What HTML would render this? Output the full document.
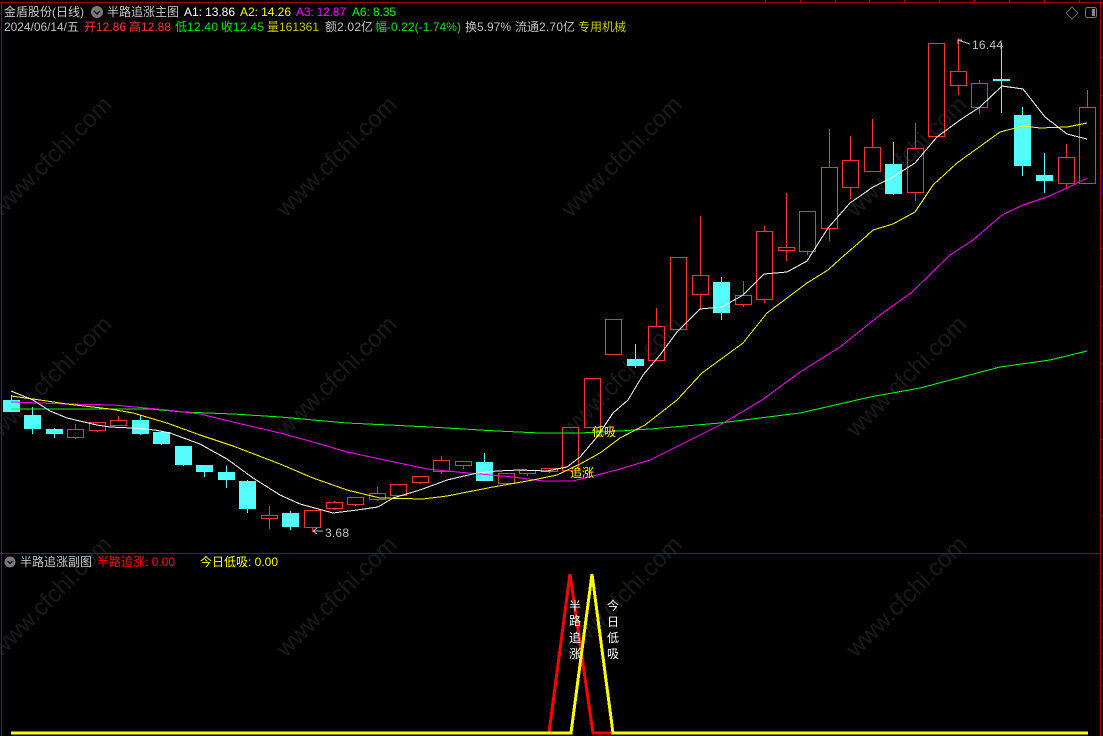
<!DOCTYPE html>
<html><head><meta charset="utf-8"><style>
html,body{margin:0;padding:0;background:#000;width:1103px;height:736px;overflow:hidden}
svg{position:absolute;left:0;top:0;display:block}
text{font-family:"Liberation Sans","WenQuanYi Zen Hei","Noto Sans CJK SC",sans-serif;font-size:12px}
.wm text{font-size:24px;fill:#1a1a1a;text-anchor:middle}
.g{fill:#c0c0c0}.r{fill:#ff3232}.n{fill:#00e600}.o{fill:#c8c800}
</style></head><body>
<svg width="1103" height="736" viewBox="0 0 1103 736" xmlns="http://www.w3.org/2000/svg">
<g class="wm">
<text transform="translate(57,162) rotate(-45)">www.cfchi.com</text>
<text transform="translate(342,162) rotate(-45)">www.cfchi.com</text>
<text transform="translate(627,162) rotate(-45)">www.cfchi.com</text>
<text transform="translate(912,162) rotate(-45)">www.cfchi.com</text>
<text transform="translate(57,382) rotate(-45)">www.cfchi.com</text>
<text transform="translate(342,382) rotate(-45)">www.cfchi.com</text>
<text transform="translate(627,382) rotate(-45)">www.cfchi.com</text>
<text transform="translate(912,382) rotate(-45)">www.cfchi.com</text>
<text transform="translate(57,602) rotate(-45)">www.cfchi.com</text>
<text transform="translate(342,602) rotate(-45)">www.cfchi.com</text>
<text transform="translate(627,602) rotate(-45)">www.cfchi.com</text>
<text transform="translate(912,602) rotate(-45)">www.cfchi.com</text>
</g>
<g stroke="#a00000" stroke-width="1" fill="none" shape-rendering="crispEdges">
<path d="M0 2.5H1103M1.5 2V736M0 553.5H1100M1100.5 2V736"/>
<path d="M765.5 0V2M800.5 0V2M835.5 0V2M869.5 0V2M904.5 0V2M939.5 0V2M974.5 0V2M1009.5 0V2M1044.5 0V2M1079.5 0V2"/>
<path d="M1100 57.5H1103M1100 95.5H1103M1100 133.5H1103M1100 172.5H1103M1100 210.5H1103M1100 248.5H1103M1100 286.5H1103M1100 325.5H1103M1100 363.5H1103M1100 401.5H1103M1100 439.5H1103M1100 477.5H1103M1100 515.5H1103"/>
<path d="M1100 573.5H1103M1100 589.5H1103M1100 605.5H1103M1100 621.5H1103M1100 637.5H1103M1100 653.5H1103M1100 669.5H1103M1100 685.5H1103M1100 701.5H1103"/>
</g>
<rect x="1101" y="178" width="2" height="17" fill="#000090"/>

<g fill="none" stroke="#ff3232" stroke-width="1" shape-rendering="crispEdges">
<rect x="67.5" y="429.5" width="16" height="8"/><path d="M75.5 424V429M75.5 438V439"/>
<rect x="89.5" y="422.5" width="16" height="8"/><path d="M97.5 431V432"/>
<rect x="110.5" y="420.5" width="16" height="5"/><path d="M118.5 416V420"/>
<rect x="261.5" y="515.5" width="16" height="3"/><path d="M269.5 506V515M269.5 519V529"/>
<rect x="304.5" y="510.5" width="16" height="17"/><path d="M312.5 528V532"/>
<rect x="326.5" y="502.5" width="16" height="6"/><path d="M334.5 501V502M334.5 509V510"/>
<rect x="347.5" y="497.5" width="16" height="7"/><path d="M355.5 505V506"/>
<rect x="369.5" y="493.5" width="16" height="6"/><path d="M377.5 487V493M377.5 500V501"/>
<rect x="390.5" y="484.5" width="16" height="11"/><path d="M398.5 496V497"/>
<rect x="412.5" y="476.5" width="16" height="6"/><path d="M420.5 483V484"/>
<rect x="433.5" y="460.5" width="16" height="11"/><path d="M441.5 456V460M441.5 472V474"/>
<rect x="455.5" y="461.5" width="16" height="4"/><path d="M463.5 466V469"/>
<rect x="498.5" y="473.5" width="16" height="10"/>
<rect x="519.5" y="470.5" width="16" height="3"/><path d="M527.5 474V476"/>
<rect x="541.5" y="468.5" width="16" height="3"/><path d="M549.5 472V473"/>
<rect x="562.5" y="427.5" width="16" height="43"/>
<rect x="584.5" y="378.5" width="16" height="49"/>
<rect x="605.5" y="319.5" width="16" height="35"/>
<rect x="648.5" y="326.5" width="16" height="34"/><path d="M656.5 308V326"/>
<rect x="670.5" y="257.5" width="16" height="72"/>
<rect x="692.5" y="275.5" width="16" height="19"/><path d="M700.5 216V275M700.5 295V309"/>
<rect x="735.5" y="295.5" width="16" height="9"/><path d="M743.5 281V295M743.5 305V307"/>
<rect x="756.5" y="231.5" width="16" height="68"/><path d="M764.5 226V231M764.5 300V303"/>
<rect x="778.5" y="247.5" width="16" height="3"/><path d="M786.5 193V247M786.5 251V261"/>
<rect x="799.5" y="211.5" width="16" height="40"/><path d="M807.5 252V255"/>
<rect x="821.5" y="167.5" width="16" height="61"/><path d="M829.5 129V167M829.5 229V241"/>
<rect x="842.5" y="160.5" width="16" height="27"/><path d="M850.5 136V160M850.5 188V199"/>
<rect x="864.5" y="147.5" width="16" height="24"/><path d="M872.5 119V147"/>
<rect x="907.5" y="148.5" width="16" height="44"/><path d="M915.5 123V148M915.5 193V201"/>
<rect x="928.5" y="43.5" width="16" height="93"/>
<rect x="950.5" y="71.5" width="16" height="14"/><path d="M958.5 38V71M958.5 86V95"/>
<rect x="971.5" y="83.5" width="16" height="24"/><path d="M979.5 80V83M979.5 108V114"/>
<rect x="1058.5" y="157.5" width="16" height="26"/><path d="M1066.5 144V157M1066.5 184V188"/>
<rect x="1079.5" y="107.5" width="16" height="76"/><path d="M1087.5 90V107"/>
</g>
<g fill="#54fcfc" shape-rendering="crispEdges">
<rect x="3" y="400" width="17" height="12"/><rect x="11" y="395" width="1" height="17"/>
<rect x="24" y="415" width="17" height="14"/><rect x="32" y="407" width="1" height="27"/>
<rect x="46" y="429" width="17" height="5"/><rect x="54" y="428" width="1" height="10"/>
<rect x="132" y="420" width="17" height="14"/><rect x="140" y="415" width="1" height="20"/>
<rect x="153" y="432" width="17" height="12"/><rect x="161" y="432" width="1" height="13"/>
<rect x="175" y="446" width="17" height="19"/><rect x="183" y="446" width="1" height="20"/>
<rect x="196" y="465" width="17" height="7"/><rect x="204" y="465" width="1" height="12"/>
<rect x="218" y="472" width="17" height="8"/><rect x="226" y="466" width="1" height="22"/>
<rect x="239" y="481" width="17" height="28"/><rect x="247" y="480" width="1" height="33"/>
<rect x="282" y="513" width="17" height="14"/><rect x="290" y="511" width="1" height="19"/>
<rect x="476" y="462" width="17" height="19"/><rect x="484" y="453" width="1" height="28"/>
<rect x="627" y="359" width="17" height="7"/><rect x="635" y="344" width="1" height="24"/>
<rect x="713" y="282" width="17" height="31"/><rect x="721" y="277" width="1" height="43"/>
<rect x="885" y="164" width="17" height="30"/><rect x="893" y="142" width="1" height="53"/>
<rect x="993" y="79" width="17" height="2"/><rect x="1001" y="43" width="1" height="70"/>
<rect x="1014" y="115" width="17" height="51"/><rect x="1022" y="107" width="1" height="69"/>
<rect x="1036" y="175" width="17" height="6"/><rect x="1044" y="153" width="1" height="40"/>
</g>

<g fill="none" stroke-width="1" shape-rendering="crispEdges">
<polyline stroke="#00ff00" points="11,409 150,409 183,412 233,414 280,417 347,423 430,427 497,431 540,433 580,433 620,431 650,429 720,423 800,413 870,397 920,388 1000,367 1050,360 1087,351"/>
<polyline stroke="#ff00ff" points="11,402 67,404 113,405 167,410 200,414 233,422 280,433 313,442 347,452 380,459 427,469 457,472 480,474 513,477 543,481 573,481 597,475 620,469 650,460 680,445 720,425 762,400 800,372 840,347 880,315 912,292 950,255 973,240 1002,215 1023,205 1047,197 1067,188 1087,178"/>
<polyline stroke="#ffff00" points="11,396 33,399 67,404 110,409 133,413 167,423 200,435 233,446 280,464 313,478 347,490 380,498 423,499 447,496 493,487 533,480 557,475 580,464 600,453 620,438 645,425 677,400 702,373 743,343 767,313 807,283 828,270 840,259 862,240 873,230 893,224 915,212 933,185 957,163 1000,132 1023,126 1040,128 1067,127 1087,123"/>
<polyline stroke="#ffffff" points="11,391 33,400 50,411 67,418 97,425 110,427 132,428 155,430 170,433 200,444 227,459 253,478 280,495 300,504 333,513 357,510 378,507 393,498 420,490 447,480 477,473 497,471 520,470 547,471 567,467 580,457 597,437 613,413 628,400 643,375 660,355 677,332 700,309 722,307 743,295 764,274 787,272 807,261 828,228 850,203 873,187 893,177 915,163 937,137 960,120 980,107 1002,86 1023,89 1045,117 1067,134 1087,139"/>
</g>

<g fill="none" stroke-width="3" shape-rendering="crispEdges">
<polyline stroke="#ff0000" points="11,733 549,733 570,574 593,733 613,733"/>
<polyline stroke="#ffff00" points="11,733 571,733 592,574 613,733 1088,733"/>
</g>

<path d="M313 531H323M313 531l4-3M313 531l4 3" stroke="#b4b4b4" fill="none" shape-rendering="crispEdges"/>
<path d="M958 40l12 4M958 40v4M958 40h4" stroke="#b4b4b4" fill="none" shape-rendering="crispEdges"/>
<text x="325" y="537" class="g" textLength="24">3.68</text>
<text x="972" y="49" class="g" textLength="31">16.44</text>
<text x="592" y="436" fill="#ffff00">低吸</text>
<text x="570" y="477" fill="#ffff00">追涨</text>

<g fill="#ffffff" text-anchor="middle">
<text x="575" y="610">半</text><text x="575" y="625">路</text><text x="575" y="642">追</text><text x="575" y="658">涨</text>
<text x="613" y="610">今</text><text x="613" y="626">日</text><text x="613" y="642">低</text><text x="613" y="658">吸</text>
</g>

<text x="4" y="16" fill="#c8c8c8">金盾股份(日线)</text>
<circle cx="97" cy="12" r="6" fill="#7a7a7a"/><path d="M94 11l3 3 3-3" stroke="#111" stroke-width="1.4" fill="none"/>
<text x="107" y="16" fill="#c8c8c8">半路追涨主图</text>
<text x="184" y="16" fill="#ffffff" textLength="51">A1: 13.86</text>
<text x="240" y="16" fill="#ffff00" textLength="51">A2: 14.26</text>
<text x="296" y="16" fill="#ff00ff" textLength="50">A3: 12.87</text>
<text x="352" y="16" fill="#00ff00" textLength="44">A6: 8.35</text>

<text x="4" y="31" class="g" textLength="63">2024/06/14/</text><text x="67" y="31" class="g">五</text>
<text x="84" y="31" class="r">开</text><text x="96" y="31" class="r" textLength="30">12.86</text>
<text x="129" y="31" class="r">高</text><text x="141" y="31" class="r" textLength="30">12.88</text>
<text x="175" y="31" class="n">低</text><text x="187" y="31" class="n" textLength="31">12.40</text>
<text x="221" y="31" class="n">收</text><text x="233" y="31" class="n" textLength="31">12.45</text>
<text x="267" y="31" class="o">量</text><text x="279" y="31" class="o" textLength="40">161361</text>
<text x="325" y="31" class="g">额</text><text x="337" y="31" class="g" textLength="24">2.02</text><text x="361" y="31" class="g">亿</text>
<text x="375" y="31" class="n">幅</text><text x="387" y="31" class="n" textLength="74">-0.22(-1.74%)</text>
<text x="465" y="31" class="g">换</text><text x="477" y="31" class="g" textLength="34">5.97%</text>
<text x="515" y="31" class="g">流通</text><text x="539" y="31" class="g" textLength="24">2.70</text><text x="563" y="31" class="g">亿</text>
<text x="578" y="31" class="o">专用机械</text>

<path d="M1072 7l6 6-6 6-6-6z" fill="none" stroke="#666"/>
<rect x="1085.5" y="7.5" width="11" height="10" rx="2" fill="none" stroke="#777"/><rect x="1092" y="9" width="3" height="7" fill="#888"/>

<circle cx="10" cy="562" r="5.5" fill="#7a7a7a"/><path d="M7.5 561l2.5 2.5 2.5-2.5" stroke="#111" stroke-width="1.3" fill="none"/>
<text x="20" y="566" fill="#c8c8c8">半路追涨副图</text>
<text x="97" y="566" fill="#ff0000">半路追涨</text><text x="145" y="566" fill="#ff0000" textLength="30">: 0.00</text>
<text x="200" y="566" fill="#ffff00">今日低吸</text><text x="248" y="566" fill="#ffff00" textLength="30">: 0.00</text>
</svg>
</body></html>
